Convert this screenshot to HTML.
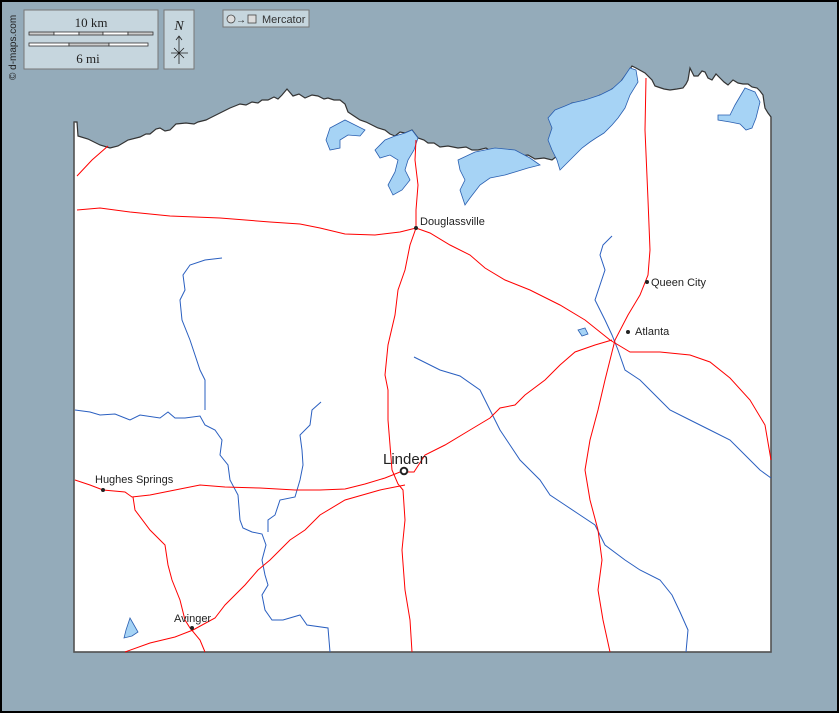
<!DOCTYPE html>
<html><head><style>
html,body{margin:0;padding:0;background:#000;}
svg{display:block}
</style></head><body>
<svg width="839" height="713" viewBox="0 0 839 713" xmlns="http://www.w3.org/2000/svg" font-family="Liberation Sans, sans-serif">
<rect x="0" y="0" width="839" height="713" fill="#000"/>
<rect x="2" y="2" width="835" height="709" fill="#94abba"/>
<!-- land -->
<path d="M77,122 L78,136 L88,139 L100,145 L110,148 L118,146 L128,140 L140,137 L146,134 L150,134 L156,129 L160,128 L165,131 L170,130 L176,124 L186,123 L194,124 L198,122 L206,120 L210,118 L216,115 L222,112 L226,110 L230,108 L235,106 L240,104 L246,105 L252,102 L258,103 L262,100 L268,100 L274,97 L278,99 L282,95 L287,89 L293,96 L299,94 L305,98 L312,95 L318,96 L324,99 L328,98 L334,100 L340,100 L345,104 L348,112 L354,116 L360,120 L366,122 L372,125 L378,128 L385,130 L390,134 L395,136 L400,132 L405,133 L412,130 L418,138 L424,140 L428,143 L434,143 L440,147 L448,146 L458,148 L466,147 L472,150 L478,150 L486,148 L492,152 L500,152 L508,150 L514,154 L520,156 L528,155 L535,159 L544,158 L552,160 L557,156 L560,148 L563,137 L565,125 L568,112 L572,103 L580,103 L585,100 L592,101 L600,95 L606,96 L612,89 L618,86 L622,80 L628,72 L632,66 L636,68 L645,73 L652,80 L655,86 L658,87 L664,89 L670,90 L677,89 L683,88 L686,84 L688,80 L690,68 L694,76 L698,76 L702,71 L705,72 L708,78 L712,80 L716,74 L720,78 L724,82 L728,85 L733,80 L738,83 L743,84 L748,84 L752,87 L757,88 L760,91 L763,95 L764,102 L765,108 L768,113 L771,117 L771,652 L74,652 L74,122 Z" fill="#fff" stroke="#333" stroke-width="1.2"/>
<path d="M74,122 L74,652 L771,652 L771,117" fill="none" stroke="#555" stroke-width="1.5"/>
<!-- lakes -->
<g fill="#a6d3f5" stroke="#2a5fb0" stroke-width="0.8">
<path d="M572,103 L585,100 L600,95 L612,89 L622,80 L630,68 L636,70 L638,82 L630,95 L625,108 L618,118 L612,125 L604,133 L596,138 L590,142 L582,148 L575,155 L565,165 L560,170 L557,160 L552,150 L548,140 L552,128 L548,118 L555,110 L565,106 Z"/>
<path d="M745,88 L755,92 L760,102 L756,118 L752,128 L746,130 L740,124 L730,122 L718,120 L718,115 L730,115 L735,105 Z"/>
<path d="M405,133 L412,130 L418,138 L414,150 L408,160 L405,170 L410,180 L402,190 L393,195 L388,185 L395,172 L398,160 L390,155 L380,158 L375,150 L385,140 L395,136 Z"/>
<path d="M330,128 L345,120 L355,125 L365,130 L360,136 L348,135 L340,140 L340,148 L330,150 L326,140 Z"/>
<path d="M458,160 L475,152 L495,148 L515,150 L530,158 L540,165 L528,168 L515,172 L505,175 L490,178 L480,185 L470,198 L465,205 L460,190 L465,180 L460,170 Z"/>
<path d="M578,330 L585,328 L588,334 L582,336 Z"/>
<path d="M130,618 L134,625 L138,632 L132,636 L124,638 L126,630 Z"/>
</g>
<!-- rivers -->
<g fill="none" stroke="#2a5fc0" stroke-width="1">
<path d="M75,410 L90,412 L100,415 L115,414 L130,420 L140,415 L160,418 L168,412 L175,418 L185,418 L200,416 L205,425 L215,430 L222,440 L220,455 L228,465 L230,480 L238,495 L240,520 L243,528 L252,532 L262,534 L266,545 L262,560 L265,575 L268,585 L262,595 L265,610 L272,620 L283,620 L300,615 L307,625 L328,628 L330,652"/>
<path d="M222,258 L205,260 L190,265 L183,275 L185,290 L180,300 L182,320 L190,340 L195,355 L200,370 L205,380 L205,400 L205,410"/>
<path d="M321,402 L312,410 L310,425 L300,435 L302,450 L303,465 L300,480 L295,497 L280,500 L275,515 L268,520 L268,532"/>
<path d="M414,357 L440,370 L460,376 L480,390 L490,410 L500,430 L510,445 L520,460 L530,470 L540,480 L550,495 L565,505 L580,515 L595,525 L605,545 L625,560 L640,570 L660,580 L672,595 L680,612 L688,630 L686,652"/>
<path d="M612,236 L603,245 L600,255 L605,270 L600,285 L595,300 L600,310 L605,320 L612,335 L618,350 L625,370 L640,380 L650,390 L660,400 L670,410 L690,420 L710,430 L730,440 L745,455 L760,470 L771,478"/>
</g>
<!-- roads -->
<g fill="none" stroke="#f00" stroke-width="1">
<path d="M77,176 L92,160 L108,146"/>
<path d="M77,210 L100,208 L130,212 L170,216 L220,218 L270,222 L300,224 L320,228 L345,234 L375,235 L400,232 L416,228 L430,233 L450,245 L470,255 L485,268 L505,280 L530,290 L560,305 L585,320 L610,340 L630,352 L660,352 L690,355 L710,362 L730,378 L750,400 L765,425 L771,460"/>
<path d="M416,140 L415,160 L418,185 L416,210 L416,228 L410,245 L405,270 L398,290 L395,315 L388,345 L385,375 L388,390 L388,420 L390,445 L392,470 L398,484 L403,490 L405,520 L402,550 L405,590 L410,620 L412,652"/>
<path d="M646,78 L645,130 L648,200 L650,250 L648,275 L640,295 L628,315 L615,340 L605,380 L598,410 L590,440 L585,470 L590,500 L598,530 L602,560 L598,590 L603,620 L610,652"/>
<path d="M75,480 L90,485 L103,490 L125,492 L132,497 L150,495 L175,490 L200,485 L225,487 L260,488 L295,490 L320,490 L345,489 L365,484 L385,478 L400,472 L414,472 L425,455 L445,445 L470,430 L490,418 L500,408 L515,405 L525,395 L545,380 L560,365 L575,352 L595,345 L612,340"/>
<path d="M133,497 L135,510 L150,530 L165,545 L168,565 L172,580 L180,600 L185,620 L190,628 L200,640 L205,652"/>
<path d="M125,652 L150,643 L175,637 L193,630 L215,618 L225,605 L245,585 L258,570 L270,560 L278,552 L290,540 L305,530 L320,515 L345,500 L380,490 L405,485"/>
</g>
<!-- towns -->
<g fill="#222">
<circle cx="416" cy="228" r="2"/>
<circle cx="647" cy="282" r="2"/>
<circle cx="628" cy="332" r="2"/>
<circle cx="103" cy="490" r="2"/>
<circle cx="192" cy="628" r="2"/>
</g>
<circle cx="404" cy="471" r="3.3" fill="#fff" stroke="#222" stroke-width="2"/>
<g fill="#222" font-size="11">
<text x="420" y="225">Douglassville</text>
<text x="651" y="286">Queen City</text>
<text x="635" y="335">Atlanta</text>
<text x="95" y="483">Hughes Springs</text>
<text x="174" y="622">Avinger</text>
<text x="383" y="464" font-size="15">Linden</text>
</g>
<!-- scale box -->
<rect x="24" y="10" width="134" height="59" fill="#c6d6de" stroke="#777"/>
<text x="91" y="27" style="font-family:'Liberation Serif',serif" font-size="13" text-anchor="middle" fill="#222">10 km</text>
<g stroke="#333" stroke-width="0.8">
<rect x="29" y="32" width="25" height="3" fill="#ccc"/><rect x="54" y="32" width="25" height="3" fill="#fff"/><rect x="79" y="32" width="24" height="3" fill="#ccc"/><rect x="103" y="32" width="25" height="3" fill="#fff"/><rect x="128" y="32" width="25" height="3" fill="#ccc"/>
<rect x="29" y="43" width="40" height="3" fill="#fff"/><rect x="69" y="43" width="40" height="3" fill="#ccc"/><rect x="109" y="43" width="39" height="3" fill="#fff"/>
</g>
<text x="88" y="63" style="font-family:'Liberation Serif',serif" font-size="13" text-anchor="middle" fill="#222">6 mi</text>
<rect x="164" y="10" width="30" height="59" fill="#c6d6de" stroke="#777"/>
<text x="179" y="30" style="font-family:'Liberation Serif',serif;font-style:italic" font-size="14" text-anchor="middle" fill="#222">N</text>
<g stroke="#222" stroke-width="0.8" fill="none"><path d="M179,36 L179,64 M176,40 L179,36 L182,40 M171,53 L188,53 M174,48 L184,58 M184,48 L174,58"/></g>
<rect x="223" y="10" width="86" height="17" fill="#c6d6de" stroke="#777"/>
<circle cx="231" cy="19" r="4" fill="#ddd" stroke="#444" stroke-width="0.8"/>
<text x="236" y="23" font-size="10" fill="#222">→</text>
<rect x="248" y="15" width="8" height="8" fill="#ddd" stroke="#444" stroke-width="0.8"/>
<text x="262" y="23" font-size="11" fill="#333">Mercator</text>
<text transform="translate(16,80) rotate(-90)" font-size="10" fill="#222">© d-maps.com</text>
</svg>
</body></html>
